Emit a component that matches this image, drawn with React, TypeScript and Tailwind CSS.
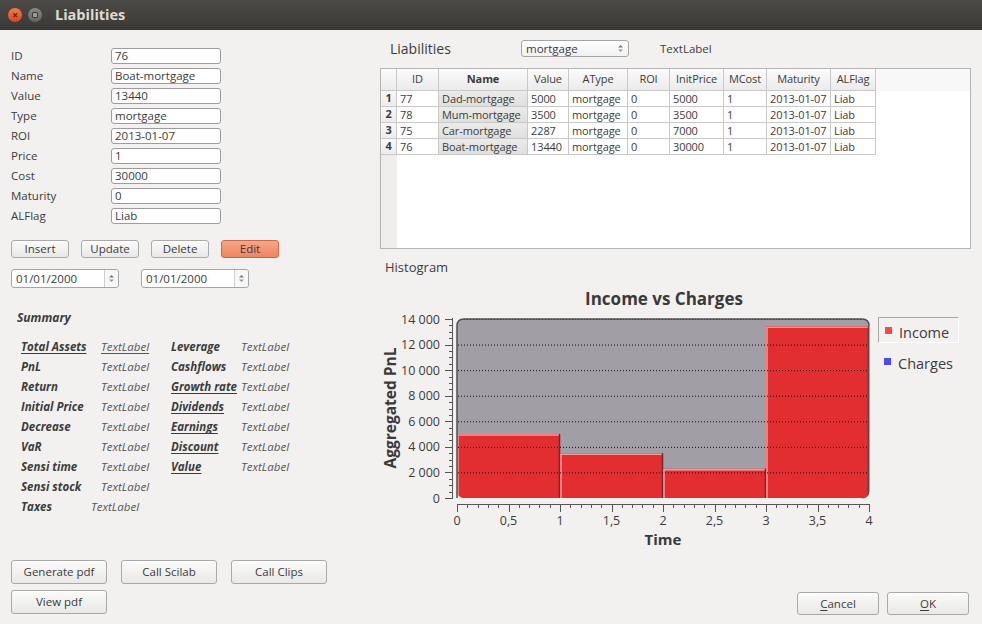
import React from 'react';

const fields = [
  ['ID', '76'],
  ['Name', 'Boat-mortgage'],
  ['Value', '13440'],
  ['Type', 'mortgage'],
  ['ROI', '2013-01-07'],
  ['Price', '1'],
  ['Cost', '30000'],
  ['Maturity', '0'],
  ['ALFlag', 'Liab'],
];

const columns: [string, number][] = [
  ['ID', 42],
  ['Name', 89],
  ['Value', 41],
  ['AType', 59],
  ['ROI', 42],
  ['InitPrice', 54],
  ['MCost', 43],
  ['Maturity', 64],
  ['ALFlag', 45],
];

const rows = [
  ['77', 'Dad-mortgage', '5000', 'mortgage', '0', '5000', '1', '2013-01-07', 'Liab'],
  ['78', 'Mum-mortgage', '3500', 'mortgage', '0', '3500', '1', '2013-01-07', 'Liab'],
  ['75', 'Car-mortgage', '2287', 'mortgage', '0', '7000', '1', '2013-01-07', 'Liab'],
  ['76', 'Boat-mortgage', '13440', 'mortgage', '0', '30000', '1', '2013-01-07', 'Liab'],
];

// [label, underlined]
const summaryLeft: [string, boolean][] = [
  ['Total Assets', true],
  ['PnL', false],
  ['Return', false],
  ['Initial Price', false],
  ['Decrease', false],
  ['VaR', false],
  ['Sensi time', false],
  ['Sensi stock', false],
];
const summaryRight: [string, boolean][] = [
  ['Leverage', false],
  ['Cashflows', false],
  ['Growth rate', true],
  ['Dividends', true],
  ['Earnings', true],
  ['Discount', true],
  ['Value', true],
];

const bars = [5000, 3500, 2287, 13440];

function Btn({ children, className = '' }: { children: React.ReactNode; className?: string }) {
  return (
    <div
      className={`flex items-center justify-center rounded-[3px] border border-[#a9a9a9] bg-gradient-to-b from-[#fbfbfa] to-[#e9e8e6] text-[#3c3c3c] shadow-[inset_0_1px_0_#fff] ${className}`}
    >
      {children}
    </div>
  );
}

function SpinArrows() {
  return (
    <svg width="7" height="9" viewBox="0 0 7 9">
      <path d="M1 3.5 L3.5 1 L6 3.5 Z" fill="#777" />
      <path d="M1 5.5 L3.5 8 L6 5.5 Z" fill="#999" />
    </svg>
  );
}

function DateEdit() {
  return (
    <div className="flex h-[19px] w-[108px] rounded-[3px] border border-[#a5a5a5] bg-white">
      <div className="flex flex-1 items-center pl-[4px]">01/01/2000</div>
      <div className="flex w-[14px] items-center justify-center border-l border-[#cfcfcf] bg-[#f7f7f7] rounded-r-[3px]">
        <SpinArrows />
      </div>
    </div>
  );
}

function Chart() {
  const y = (v: number) => 498 - (v * 179) / 14000;
  const x = (t: number) => 457 + t * 103;
  const majorY = [0, 2000, 4000, 6000, 8000, 10000, 12000, 14000];
  const minorY = Array.from({ length: 29 }, (_, i) => i * 500);
  const minorX = Array.from({ length: 41 }, (_, i) => i / 10);
  const majorX = [0, 0.5, 1, 1.5, 2, 2.5, 3, 3.5, 4];
  const fmt = (v: number) => (v >= 1000 ? `${Math.floor(v / 1000)} 000` : `${v}`);
  return (
    <svg width="592" height="272" viewBox="380 278 592 272" className="block">
      <defs>
        <clipPath id="plot">
          <rect x="457" y="319" width="412" height="179" rx="7" />
        </clipPath>
      </defs>
      <text x="664" y="305" textAnchor="middle" fontSize="17" fontWeight="700" fill="#3a3a3a">
        Income vs Charges
      </text>
      <rect x="457" y="319" width="412" height="179" rx="7" fill="#a19fa5" />
      <g clipPath="url(#plot)">
        {bars.map((v, i) => (
          <g key={i}>
            <rect x={x(i)} y={y(v)} width={103} height={498 - y(v)} fill="#e22e31" />
            <path d={`M${x(i) + 1} 498 L${x(i) + 1} ${y(v) + 1} L${x(i + 1) - 1} ${y(v) + 1}`} stroke="#f39a9a" strokeWidth="1.5" fill="none" />
            <path d={`M${x(i + 1) - 0.5} ${y(v)} L${x(i + 1) - 0.5} 498`} stroke="#6b2b2d" strokeWidth="1.5" />
          </g>
        ))}
        {majorY.slice(1).map((v) => (
          <line key={v} x1="458" x2="868" y1={y(v) + 0.5} y2={y(v) + 0.5} stroke="#111" strokeWidth="1" strokeDasharray="1 2" />
        ))}
      </g>
      <path d="M457 498 L457 326 Q457 319 464 319 L862 319 Q869 319 869 326" stroke="#505050" strokeWidth="1.5" fill="none" />
      <path d="M869 326 L869 491 Q869 498 862 498" stroke="#5a5a5a" strokeWidth="1" fill="none" />
      {/* y axis */}
      <line x1="452.5" x2="452.5" y1="318" y2="498.5" stroke="#555" />
      {minorY.map((v) => (
        <line key={v} x1="449" x2="453" y1={Math.round(y(v)) + 0.5} y2={Math.round(y(v)) + 0.5} stroke="#555" />
      ))}
      {majorY.map((v) => (
        <g key={v}>
          <line x1="445" x2="453" y1={Math.round(y(v)) + 0.5} y2={Math.round(y(v)) + 0.5} stroke="#555" />
          <text x="440" y={y(v) + 4.5} textAnchor="end" fontSize="12.5" fill="#3c3c3c">
            {fmt(v)}
          </text>
        </g>
      ))}
      {/* x axis */}
      <line x1="457" x2="869.5" y1="504.5" y2="504.5" stroke="#555" />
      {minorX.map((t) => (
        <line key={t} x1={Math.round(x(t)) + 0.5} x2={Math.round(x(t)) + 0.5} y1="504" y2="508" stroke="#555" />
      ))}
      {majorX.map((t) => (
        <g key={t}>
          <line x1={Math.round(x(t)) + 0.5} x2={Math.round(x(t)) + 0.5} y1="504" y2="512" stroke="#555" />
          <text x={x(t)} y="525" textAnchor="middle" fontSize="12.5" fill="#3c3c3c">
            {String(t).replace('.', ',')}
          </text>
        </g>
      ))}
      <text x="663" y="545" textAnchor="middle" fontSize="15" fontWeight="700" fill="#3a3a3a">
        Time
      </text>
      <text x="396" y="408" transform="rotate(-90 396 408)" textAnchor="middle" fontSize="15.5" fontWeight="700" fill="#3a3a3a">
        Aggregated PnL
      </text>
      {/* legend */}
      <rect x="878.5" y="317.5" width="80" height="25" fill="#f2f1f0" stroke="#fff" />
      <path d="M878.5 342.5 L878.5 317.5 L958.5 317.5" stroke="#a8a8a8" fill="none" />
      <rect x="885" y="327" width="7" height="7" fill="#f44a4a" />
      <text x="899" y="337.5" fontSize="14.5" fill="#3c3c3c">Income</text>
      <rect x="884" y="358" width="7" height="7" fill="#4a4af6" />
      <text x="898" y="368.5" fontSize="14.5" fill="#3c3c3c">Charges</text>
    </svg>
  );
}

export default function App() {
  return (
    <div className="flex h-[624px] w-[982px] flex-col overflow-hidden bg-[#f2f1f0] font-['Open_Sans',sans-serif] text-[11.5px] text-[#3c3c3c]">
      {/* title bar */}
      <div className="flex h-[30px] items-center bg-gradient-to-b from-[#4b4a46] to-[#3a3935]">
        <div className="ml-[8px] flex h-[14px] w-[14px] items-center justify-center rounded-full bg-gradient-to-b from-[#f47a4f] to-[#dc4416] text-[10px] font-bold leading-none text-[#5a2210]">
          ×
        </div>
        <div className="ml-[6px] flex h-[14px] w-[14px] items-center justify-center rounded-full bg-gradient-to-b from-[#8a8984] to-[#63625e]">
          <div className="h-[6px] w-[6px] rounded-[1px] border border-[#3f3e3a] bg-[#9a9994]" />
        </div>
        <div className="ml-[13px] text-[14.5px] font-bold text-[#dfdbd2]">Liabilities</div>
      </div>

      <div className="flex flex-1">
        {/* left column */}
        <div className="flex w-[380px] flex-col pl-[11px] pt-[18px] pb-[10px]">
          <div className="flex flex-col gap-1">
            {fields.map(([label, value]) => (
              <div key={label} className="flex h-4 items-center">
                <div className="w-[100px]">{label}</div>
                <div className="flex h-4 w-[110px] items-center rounded-[3px] border border-[#9d9d9d] bg-white pl-[3px] leading-none">
                  {value}
                </div>
              </div>
            ))}
          </div>

          <div className="mt-4 flex gap-3">
            <Btn className="h-[18px] w-[58px]">Insert</Btn>
            <Btn className="h-[18px] w-[58px]">Update</Btn>
            <Btn className="h-[18px] w-[58px]">Delete</Btn>
            <div className="flex h-[18px] w-[58px] items-center justify-center rounded-[3px] border border-[#c8694a] bg-gradient-to-b from-[#f7a689] to-[#ee8560] text-[#3c3c3c]">
              Edit
            </div>
          </div>

          <div className="mt-[11px] flex gap-[22px]">
            <DateEdit />
            <DateEdit />
          </div>

          <div className="mt-[22px] pl-[6px] text-[12px] font-bold italic leading-4">Summary</div>

          <div className="mt-[11px] flex flex-col pl-[10px] italic">
            {summaryLeft.map(([label, u1], i) => {
              const right = summaryRight[i];
              return (
                <div key={label} className="flex h-5 items-center">
                  <div className="w-[80px]">
                    <span className={`font-bold ${u1 ? 'underline decoration-1 underline-offset-2' : ''}`}>{label}</span>
                  </div>
                  <div className="w-[70px] text-[#555]">
                    <span className={i === 0 ? 'underline decoration-1 underline-offset-2' : ''}>TextLabel</span>
                  </div>
                  {right && (
                    <>
                      <div className="w-[70px]">
                        <span className={`font-bold ${right[1] ? 'underline decoration-1 underline-offset-2' : ''}`}>{right[0]}</span>
                      </div>
                      <div className="text-[#555]">TextLabel</div>
                    </>
                  )}
                </div>
              );
            })}
            <div className="flex h-5 items-center">
              <div className="w-[70px] font-bold">Taxes</div>
              <div className="text-[#555]">TextLabel</div>
            </div>
          </div>

          <div className="flex-1" />

          <div className="flex flex-col gap-[6px]">
            <div className="flex gap-[14px]">
              <Btn className="h-6 w-[96px]">Generate pdf</Btn>
              <Btn className="h-6 w-[96px]">Call Scilab</Btn>
              <Btn className="h-6 w-[96px]">Call Clips</Btn>
            </div>
            <Btn className="h-6 w-[96px]">View pdf</Btn>
          </div>
        </div>

        {/* right column */}
        <div className="flex flex-1 flex-col pt-[10px] pb-[9px]">
          <div className="flex h-[17px] items-center">
            <div className="ml-[10px] w-[131px] text-[14px]">Liabilities</div>
            <div className="flex h-[17px] w-[108px] items-center justify-between rounded-[3px] border border-[#a5a5a5] bg-gradient-to-b from-[#ffffff] to-[#f1f1f1] pl-[4px] pr-[4px]">
              <span>mortgage</span>
              <SpinArrows />
            </div>
            <div className="ml-[31px]">TextLabel</div>
          </div>

          {/* table */}
          <div className="mt-[11px] flex h-[181px] w-[591px] border border-[#b4b4b4] bg-white text-[11px] tracking-[-0.1px]">
            <div className="flex w-[16px] flex-col bg-[#efeeed]">
              <div className="h-[22px] border-r border-b border-[#c9c9c9] bg-gradient-to-b from-[#fbfbfb] to-[#ebebeb]" />
              {rows.map((_, i) => (
                <div key={i} className="flex h-4 items-center justify-center border-r border-b border-[#c9c9c9] bg-gradient-to-b from-[#f9f9f9] to-[#ececec] text-[11px] font-bold">
                  {i + 1}
                </div>
              ))}
            </div>
            <div className="flex flex-1 flex-col">
              <div className="flex h-[22px] bg-[#f8f8f8]">
                {columns.map(([name, w]) => (
                  <div
                    key={name}
                    style={{ width: w }}
                    className={`flex items-center justify-center border-r border-b border-[#c9c9c9] bg-gradient-to-b from-[#fbfbfb] to-[#ebebeb] ${name === 'Name' ? 'font-bold' : ''}`}
                  >
                    {name}
                  </div>
                ))}
              </div>
              {rows.map((r, ri) => (
                <div key={ri} className="flex h-4">
                  {r.map((c, ci) => (
                    <div
                      key={ci}
                      style={{ width: columns[ci][1] }}
                      className={`flex items-center overflow-hidden whitespace-nowrap border-r border-b border-[#c9c9c9] pl-[3px] leading-none ${ci === 1 ? 'bg-gradient-to-b from-[#ebebea] to-[#dfdfdd]' : ''}`}
                    >
                      {c}
                    </div>
                  ))}
                </div>
              ))}
            </div>
          </div>

          <div className="mt-[10px] pl-[5px] text-[13px] leading-4">Histogram</div>
          <div className="mt-[3px]">
            <Chart />
          </div>

          <div className="flex-1" />
          <div className="flex justify-end gap-2 pr-[13px]">
            <Btn className="h-[23px] w-[82px]">
              <span>
                <span className="underline underline-offset-2">C</span>ancel
              </span>
            </Btn>
            <Btn className="h-[23px] w-[82px]">
              <span>
                <span className="underline underline-offset-2">O</span>K
              </span>
            </Btn>
          </div>
        </div>
      </div>
    </div>
  );
}
